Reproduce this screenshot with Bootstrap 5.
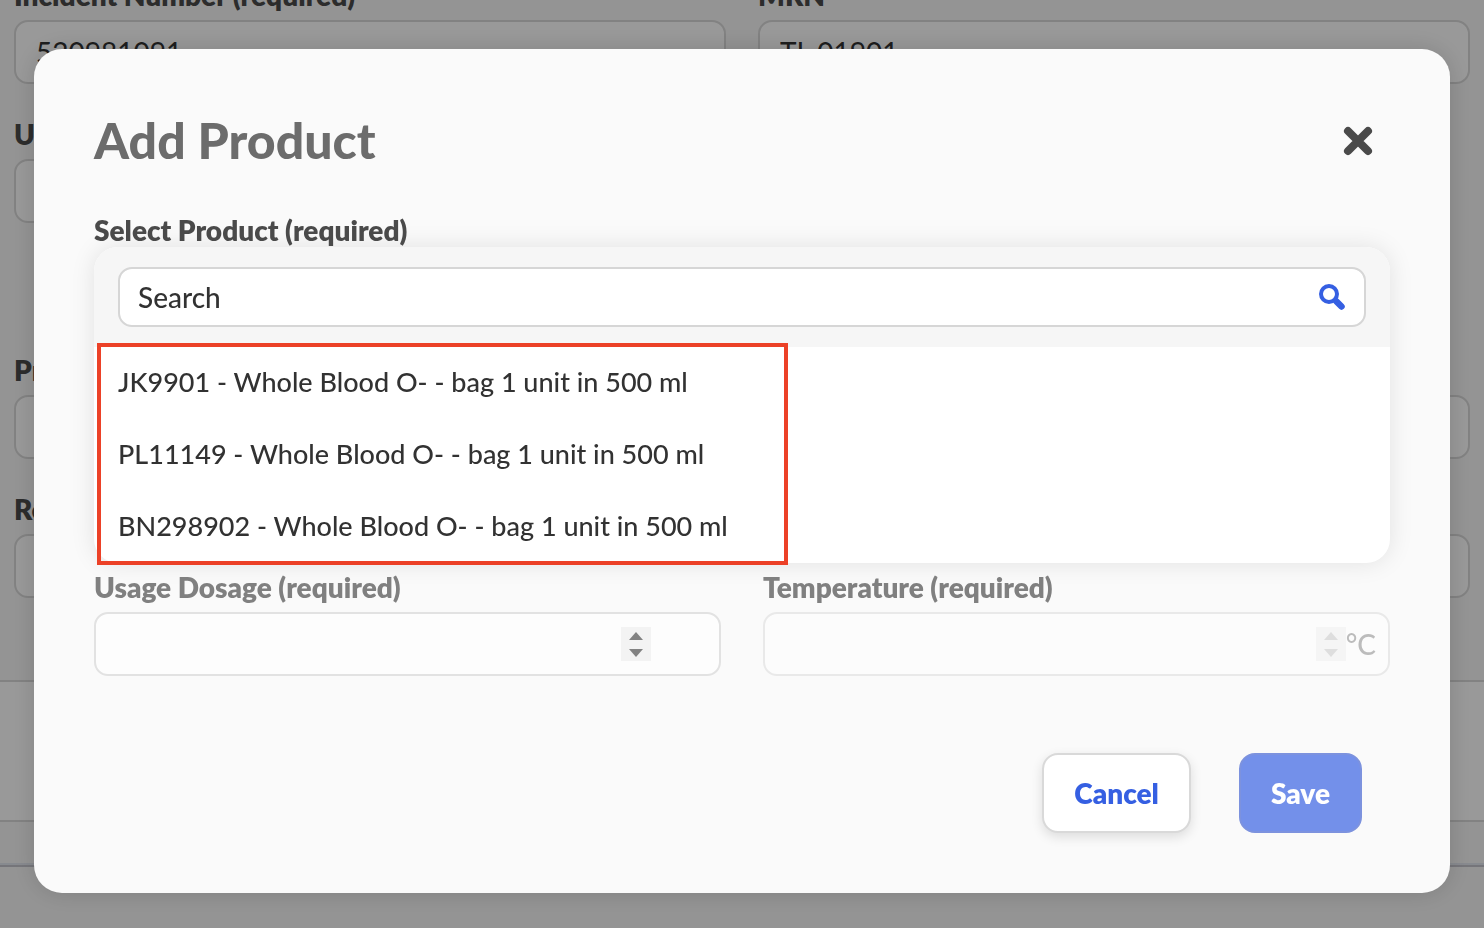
<!DOCTYPE html>
<html lang="en">
<head>
<meta charset="utf-8">
<meta name="viewport" content="width=device-width, initial-scale=1">
<title>Add Product</title>
<link rel="stylesheet" href="https://cdn.jsdelivr.net/npm/bootstrap@5.3.0/dist/css/bootstrap.min.css">
<style>
  body { font-family: Lato, "Liberation Sans", sans-serif; font-size: 28px; line-height: 34px; color: #323232; background: #f7f7f7; }
  .page { height: 100vh; }
  .record { margin-top: -22px; }
  .record-row { display: grid; grid-template-columns: 1fr 1fr; gap: 32px; padding: 0 14px; margin-bottom: 33px; }
  .record-row.section-end { margin-bottom: 130px; }
  .record-row.last { margin-bottom: 82px; }
  .field-label { display: block; font-weight: 800; margin-bottom: 8px; color: #4a4a4a; white-space: nowrap; }
  .field-box.form-control { height: 64px; border: 2px solid #d9d9d9; border-radius: 14px; padding: 0 20px; font-size: 28px; background: #fff; color: #323232; }
  .strip { height: 142px; background: #fff; border: solid #d9d9d9; border-width: 2px 0; }
  .page-foot { height: 45px; border-bottom: 2px solid #c4c4cc; box-shadow: inset 0 -2px 0 #e2e6ee; }

  .scrim { background: rgba(0, 0, 0, .4); padding: 49px 34px 35px; overflow: auto; z-index: 10; }
  .dialog-panel { background: #fafafa; border-radius: 28px; padding: 60px; box-shadow: 0 0 24px rgba(0, 0, 0, .15); }
  .dialog-head { margin-bottom: 40px; }
  .dialog-title { font-family: Lato, sans-serif; font-weight: 900; font-size: 50px; line-height: 62px; margin-bottom: 2px; color: #6c6c6c; }
  .close-x { width: 64px; height: 64px; color: #4a4a4a; }
  .picker { border-radius: 24px; background: #fff; box-shadow: 0 0 24px rgba(0, 0, 0, .1); margin-bottom: 7px; }
  .picker-head { background: #f6f6f6; border-radius: 24px 24px 0 0; padding: 20px 24px; }
  .search-box.form-control { height: 60px; border: 2px solid #d6d6d6; border-radius: 14px; padding: 0 60px 0 18px; font-size: 28px; font-weight: 500; color: #323232; }
  .search-box::placeholder { color: #323232; opacity: 1; }
  .search-icon { right: 21px; top: 17px; }
  .option.btn { height: 72px; padding: 0 24px 2px; font-size: 27px; font-weight: 500; line-height: 70px; color: #323232; text-align: left; }
  .callout { left: 3px; top: -4px; bottom: -2px; width: 691px; max-width: 100%; border: 4px solid #ec4127; pointer-events: none; }
  .dose-grid { display: grid; grid-template-columns: 1fr 1fr; gap: 42px; margin-bottom: 77px; }
  .dose-grid .field-label { color: #808080; }
  .dose-grid .field-box.form-control { border-color: #e2e2e2; background: #fdfdfd; appearance: textfield; }
  .dose-grid .field-box.form-control:disabled { border-color: #e9e9e9; background: #fcfcfc; }
  .spin { right: 70px; top: 15px; color: #828282; background: #f3f3f3; width: 30px; height: 34px; }
  .unit { right: 14px; top: 15px; color: #bcbcbc; font-weight: 500; }
  .unit svg { color: #dedede; background: #f5f5f5; }
  input[type=number]::-webkit-inner-spin-button { display: none; }
  .actions { padding-right: 28px; }
  .act.btn { height: 80px; padding: 0 30px; border: 2px solid #d9d9d9; border-radius: 16px; font-size: 28px; font-weight: 800; }
  .act-cancel.btn { background: #fff; color: #355fe2; box-shadow: 0 4px 12px rgba(0, 0, 0, .12); }
  .act-save.btn:disabled { background: #7390ea; border-color: #7c92de; color: #fff; opacity: 1; }
</style>
</head>
<body>
<div class="page overflow-hidden">
  <form class="record">
    <div class="record-row">
      <div><label class="field-label" for="incident">Incident Number (required)</label><input id="incident" class="form-control field-box" value="520981091"></div>
      <div><label class="field-label" for="mrn">MRN</label><input id="mrn" class="form-control field-box" value="TL 01901"></div>
    </div>
    <div class="record-row section-end">
      <div><label class="field-label" for="unit">U</label><input id="unit" class="form-control field-box"></div>
    </div>
    <div class="record-row d-block">
      <label class="field-label" for="pr">Pr</label><input id="pr" class="form-control field-box">
    </div>
    <div class="record-row last d-block">
      <label class="field-label" for="re">Re</label><input id="re" class="form-control field-box">
    </div>
    <div class="strip"></div>
    <div class="page-foot"></div>
  </form>
</div>

<div class="scrim position-fixed top-0 start-0 w-100 h-100">
  <section class="dialog-panel" role="dialog" aria-modal="true" aria-labelledby="dlgTitle">
    <header class="dialog-head d-flex justify-content-between align-items-center">
      <h1 class="dialog-title" id="dlgTitle">Add Product</h1>
      <button type="button" class="btn close-x border-0 p-0 d-flex align-items-center justify-content-center" aria-label="Close">
        <svg width="30" height="30" viewBox="0 0 30 30" fill="none" stroke="currentColor" stroke-width="8" stroke-linecap="round"><path d="M5 5l20 20M25 5L5 25"/></svg>
      </button>
    </header>

    <label class="field-label mb-0" for="search">Select Product (required)</label>
    <div class="picker">
      <div class="picker-head">
        <div class="position-relative">
          <input id="search" type="text" class="form-control search-box" placeholder="Search">
          <svg class="search-icon position-absolute" width="26" height="26" viewBox="0 0 26 26" fill="none" stroke="#355fe2" aria-hidden="true"><circle cx="10" cy="10" r="8" stroke-width="4"/><path d="M17.500 17.500l5 5" stroke-width="6.500" stroke-linecap="round"/><path d="M15 15l3 3" stroke-width="4"/></svg>
        </div>
      </div>
      <div class="position-relative d-flex flex-column">
        <button type="button" class="btn option border-0">JK9901 - Whole Blood O- - bag 1 unit in 500 ml</button>
        <button type="button" class="btn option border-0">PL11149 - Whole Blood O- - bag 1 unit in 500 ml</button>
        <button type="button" class="btn option border-0">BN298902 - Whole Blood O- - bag 1 unit in 500 ml</button>
        <div class="callout position-absolute"></div>
      </div>
    </div>

    <div class="dose-grid">
      <div>
        <label class="field-label" for="dose">Usage Dosage (required)</label>
        <div class="position-relative">
          <input id="dose" type="number" class="form-control field-box">
          <svg class="spin position-absolute" viewBox="0 0 30 34" fill="currentColor" aria-hidden="true"><path d="M8 13l7-8 7 8zM8 22l7 8 7-8z"/></svg>
        </div>
      </div>
      <div>
        <label class="field-label" for="temp">Temperature (required)</label>
        <div class="position-relative">
          <input id="temp" type="number" class="form-control field-box" disabled>
          <div class="unit position-absolute d-flex">
            <svg width="30" height="34" viewBox="0 0 30 34" fill="currentColor" aria-hidden="true"><path d="M8 13l7-8 7 8zM8 22l7 8 7-8z"/></svg>
            <span>°C</span>
          </div>
        </div>
      </div>
    </div>

    <footer class="actions d-flex justify-content-end gap-5">
      <button type="button" class="btn act act-cancel">Cancel</button>
      <button type="button" class="btn act act-save" disabled>Save</button>
    </footer>
  </section>
</div>
<script src="https://cdn.jsdelivr.net/npm/bootstrap@5.3.0/dist/js/bootstrap.bundle.min.js"></script>
</body>
</html>
